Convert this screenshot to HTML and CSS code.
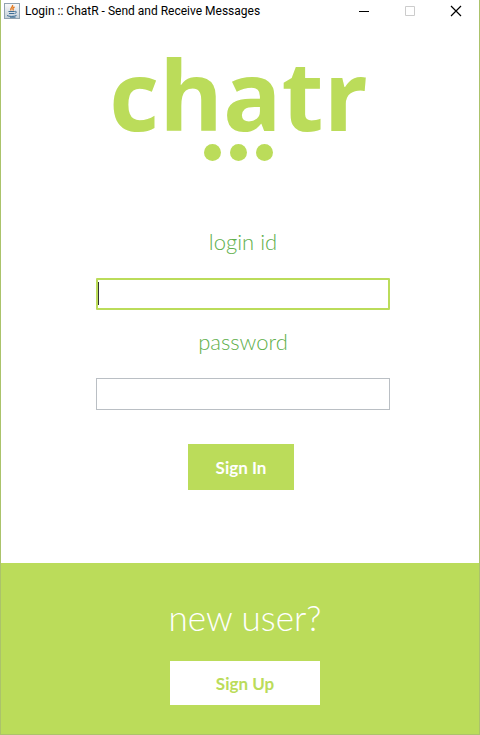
FILE: index.html
```html
<!DOCTYPE html>
<html lang="en">
<head>
<meta charset="utf-8">
<meta name="viewport" content="width=device-width, initial-scale=1">
<title>Login :: ChatR - Send and Receive Messages</title>
<link rel="stylesheet" href="styles.css">
</head>
<body>
<div class="window">
  <header class="titlebar">
    <svg class="app-icon" viewBox="0 0 16 16" aria-hidden="true">
      <defs><linearGradient id="tile" x1="0" y1="0" x2="0" y2="1"><stop offset="0" stop-color="#fafafa"/><stop offset="1" stop-color="#c3ced8"/></linearGradient></defs>
      <rect x=".5" y=".5" width="15" height="15" fill="url(#tile)" stroke="#91a2b0"/>
      <path d="M8.500 2c1 2-3 3-1.500 5.500M10.500 4c-2 1-2 1.500-1 3.500" fill="none" stroke="#e5781e" stroke-width="1.400"/>
      <path d="M4.500 8.500h6M5 10.500h5M10.500 8.500c2.500-.8 2.500 1.500 0 2M3 12.500c2 1.200 7 1.200 9.500 0M6 14.200h5.500" fill="none" stroke="#3f6e96"/>
    </svg>
    <span class="title">Login :: ChatR - Send and Receive Messages</span>
    <div class="controls">
      <button type="button" class="control" aria-label="Minimize"><svg viewBox="0 0 10 10"><path d="M0 5.500h10" stroke="#000"/></svg></button>
      <button type="button" class="control" aria-label="Maximize" disabled><svg viewBox="0 0 10 10"><path d="M.5.5h9v9h-9z" fill="none" stroke="#ccc"/></svg></button>
      <button type="button" class="control" aria-label="Close"><svg viewBox="0 0 10 10"><path d="M0 0l10 10M10 0L0 10" stroke="#000" stroke-width="1.200"/></svg></button>
    </div>
  </header>
  <main class="content">
    <div class="brand">
      <h1 class="logo">chatr</h1>
      <div class="dots"><span class="dot"></span><span class="dot"></span><span class="dot"></span></div>
    </div>
    <form class="login">
      <label class="label" for="login-id">login id</label>
      <div class="field active"><input class="input" id="login-id" type="text"></div>
      <label class="label" for="password">password</label>
      <div class="field"><input class="input" id="password" type="password"></div>
      <button class="sign-in" type="submit">Sign In</button>
    </form>
  </main>
  <footer class="register">
    <h2 class="question">new user?</h2>
    <button class="sign-up" type="button">Sign Up</button>
  </footer>
</div>
</body>
</html>
```
FILE: styles.css
```css
* { box-sizing: border-box; }
body { margin: 0; background: #fff; font-family: Lato, "Open Sans", sans-serif; }
button { border: 0; padding: 0; font-family: inherit; }

.window {
  display: flex;
  flex-direction: column;
  min-height: 100vh;
  border: 1px solid #abc36b;
  border-top: 0;
}

.titlebar { display: flex; align-items: center; height: 22px; padding-left: 3px; }
.app-icon { width: 16px; height: 16px; margin-right: 5px; }
.title { flex: 1; font: 12px/22px Roboto, sans-serif; color: #000; white-space: nowrap; }
.controls { display: flex; }
.control { display: flex; align-items: center; justify-content: center; width: 46px; height: 22px; background: none; }
.control svg { width: 10px; height: 10px; overflow: visible; }

.content { flex: 1; display: flex; flex-direction: column; align-items: center; }
.brand { display: flex; flex-direction: column; align-items: center; padding: 23px 3px 0 0; }
.logo { margin: 0; font: bold 97px/96px "Open Sans", sans-serif; color: #bbdc5a; }
.dots { display: flex; gap: 9px; margin-top: 3px; }
.dot { width: 17px; height: 17px; border-radius: 50%; background: #bbdc5a; }

.login {
  display: flex;
  flex-direction: column;
  align-items: center;
  width: 100%;
  max-width: 300px;
  margin-top: 63px;
  padding-left: 6px;
}
.label { font-size: 22px; font-weight: 300; line-height: 36px; color: #5fb04c; }
.field { position: relative; width: 100%; margin: 18px 0 14px; }
.input {
  display: block;
  width: 100%;
  height: 32px;
  padding: 0 4px;
  border: 1px solid #babfc4;
  background: #fff;
  font: 20px Lato, sans-serif;
  outline: 0;
}
.active .input { border: 2px solid #bbdc5a; border-radius: 1px; }
.active::after {
  content: "";
  position: absolute;
  left: 2px;
  top: 4px;
  width: 1px;
  height: 23px;
  background: #333;
}
.sign-in {
  width: 106px;
  height: 46px;
  margin: 20px 4px 0 0;
  background: #bbdc5a;
  color: #fff;
  font-size: 17px;
  font-weight: 700;
}

.register {
  display: flex;
  flex-direction: column;
  align-items: center;
  padding: 30px 0 29px 10px;
  background: #bbdc5a;
}
.question { margin: 0; font-size: 35px; font-weight: 300; line-height: 48px; color: #fff; }
.sign-up {
  width: 150px;
  height: 44px;
  margin-top: 20px;
  background: #fff;
  color: #bbdc5a;
  font-size: 17px;
  font-weight: 700;
}
```
